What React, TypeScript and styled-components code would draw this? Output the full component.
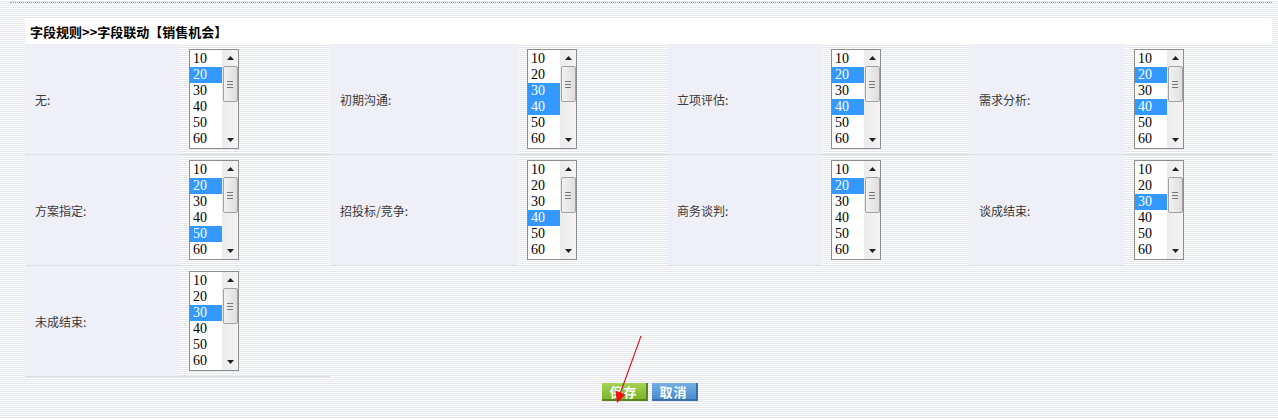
import React from "react";
import styled, { createGlobalStyle } from "styled-components";

const GlobalStyle = createGlobalStyle`
  html, body {
    margin: 0;
    padding: 0;
  }
  body {
    background: repeating-linear-gradient(
      to bottom,
      #ffffff 0px,
      #ffffff 1px,
      #e6e6ee 1px,
      #e6e6ee 2px
    );
    font-family: "Noto Sans CJK SC", "Liberation Sans", sans-serif;
    min-height: 419px;
  }
`;

const Page = styled.div`
  position: relative;
  width: 1278px;
  height: 419px;
  overflow: hidden;
`;

const DottedRule = styled.div`
  margin: 2px 6px 0 10px;
  border-top: 1px dotted #9a9a9a;
  height: 0;
`;

const Panel = styled.div`
  margin: 15px 0 0 25px;
  width: 1247px;
`;

const Header = styled.div`
  height: 26px;
  background: #ffffff;
  display: flex;
  align-items: center;
  padding-left: 5px;
  font-size: 13px;
  font-weight: bold;
  color: #000;
  font-family: "Noto Sans CJK SC", "Liberation Sans", sans-serif;
`;

const Grid = styled.div`
  display: grid;
  grid-template-columns: 155px 150px 188px 149px 155px 147px 156px 147px;
`;

const LabelCell = styled.div`
  box-sizing: border-box;
  height: 111px;
  background: #efeff7;
  border-bottom: 1px solid #dedee8;
  display: flex;
  align-items: center;
  padding-left: 10px;
  font-size: 12px;
  color: #3a3a3a;
`;

const ValueCell = styled.div`
  box-sizing: border-box;
  height: 111px;
  border-bottom: 1px solid #dedee8;
  padding: 5px 0 0 9px;
`;

const ListBox = styled.div`
  box-sizing: border-box;
  width: 50px;
  height: 100px;
  border: 1px solid #8d8d8d;
  background: #ffffff;
  display: flex;
`;

const Options = styled.div`
  width: 32px;
  padding-top: 1px;
`;

const Option = styled.div<{ $selected: boolean }>`
  height: 16px;
  line-height: 16px;
  padding-left: 3px;
  font-family: "Liberation Serif", "DejaVu Serif", serif;
  font-size: 14px;
  color: ${(p) => (p.$selected ? "#ffffff" : "#000000")};
  background: ${(p) => (p.$selected ? "#3399ff" : "transparent")};
`;

const ScrollBar = styled.div`
  width: 16px;
  background: linear-gradient(to right, #ebebeb, #f4f4f4);
  display: flex;
  flex-direction: column;
  align-items: center;
`;

const ArrowButton = styled.div`
  height: 16px;
  width: 16px;
  display: flex;
  align-items: center;
  justify-content: center;
`;

const Thumb = styled.div`
  box-sizing: border-box;
  width: 15px;
  height: 36px;
  border: 1px solid #a2a2a2;
  border-radius: 2px;
  background: linear-gradient(to right, #f2f2f2, #dedede);
  display: flex;
  flex-direction: column;
  align-items: center;
  justify-content: center;
  gap: 2px;
`;

const Grip = styled.div`
  width: 6px;
  height: 1px;
  background: #777;
`;

const Spacer = styled.div`
  flex: 1;
`;

const ButtonRow = styled.div`
  width: 1247px;
  margin: 6px 0 0 26px;
  display: flex;
  justify-content: center;
  gap: 4px;
`;

const ImgButton = styled.div<{ $tone: "green" | "blue" }>`
  box-sizing: border-box;
  width: 46px;
  height: 18px;
  display: flex;
  align-items: center;
  justify-content: center;
  font-size: 13px;
  font-weight: bold;
  color: #ffffff;
  letter-spacing: 1px;
  background: ${(p) =>
    p.$tone === "green"
      ? "linear-gradient(to bottom, #a6d254, #7cb52c)"
      : "linear-gradient(to bottom, #74aee6, #4c8ccd)"};
  border-right: 2px solid ${(p) => (p.$tone === "green" ? "#5a8620" : "#3b6ea6")};
  border-bottom: 2px solid ${(p) => (p.$tone === "green" ? "#5a8620" : "#3b6ea6")};
`;

const Annotation = styled.svg`
  position: absolute;
  left: 0;
  top: 0;
  pointer-events: none;
`;

const values = ["10", "20", "30", "40", "50", "60"];

type Field = { label: string; selected: number[] };

const fields: Field[] = [
  { label: "无:", selected: [1] },
  { label: "初期沟通:", selected: [2, 3] },
  { label: "立项评估:", selected: [1, 3] },
  { label: "需求分析:", selected: [1, 3] },
  { label: "方案指定:", selected: [1, 4] },
  { label: "招投标/竞争:", selected: [3] },
  { label: "商务谈判:", selected: [1] },
  { label: "谈成结束:", selected: [2] },
  { label: "未成结束:", selected: [2] },
];

const UpArrow = () => (
  <svg width="7" height="4" viewBox="0 0 7 4">
    <path d="M0 4 L3.5 0 L7 4 Z" fill="#222" />
  </svg>
);

const DownArrow = () => (
  <svg width="7" height="4" viewBox="0 0 7 4">
    <path d="M0 0 L3.5 4 L7 0 Z" fill="#222" />
  </svg>
);

const MultiSelect: React.FC<{ selected: number[] }> = ({ selected }) => (
  <ListBox>
    <Options>
      {values.map((v, i) => (
        <Option key={v} $selected={selected.includes(i)}>
          {v}
        </Option>
      ))}
    </Options>
    <ScrollBar>
      <ArrowButton>
        <UpArrow />
      </ArrowButton>
      <Thumb>
        <Grip />
        <Grip />
        <Grip />
      </Thumb>
      <Spacer />
      <ArrowButton>
        <DownArrow />
      </ArrowButton>
    </ScrollBar>
  </ListBox>
);

export default function App() {
  return (
    <>
      <GlobalStyle />
      <Page>
        <DottedRule />
        <Panel>
          <Header>字段规则&gt;&gt;字段联动【销售机会】</Header>
          <Grid>
            {fields.map((f) => (
              <React.Fragment key={f.label}>
                <LabelCell>{f.label}</LabelCell>
                <ValueCell>
                  <MultiSelect selected={f.selected} />
                </ValueCell>
              </React.Fragment>
            ))}
          </Grid>
        </Panel>
        <ButtonRow>
          <ImgButton $tone="green">保存</ImgButton>
          <ImgButton $tone="blue">取消</ImgButton>
        </ButtonRow>
        <Annotation width="1278" height="419" viewBox="0 0 1278 419">
          <line x1="641" y1="336" x2="620" y2="394" stroke="#d4202c" strokeWidth="1.2" />
          <path d="M617 403 L625.5 394.5 L615.5 390.5 Z" fill="#ee1111" />
        </Annotation>
      </Page>
    </>
  );
}
